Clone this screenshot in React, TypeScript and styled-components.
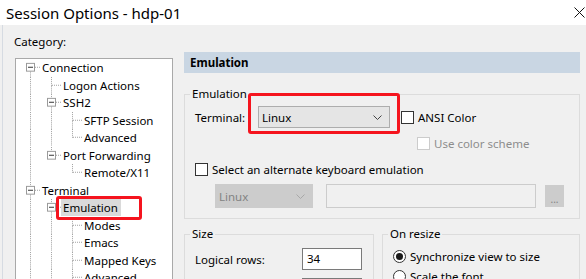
import React from 'react';
import styled, { createGlobalStyle } from 'styled-components';

const GlobalStyle = createGlobalStyle`
  html, body {
    margin: 0;
    padding: 0;
    background: #f0f0f0;
  }
  body {
    font-family: "Noto Sans", "Liberation Sans", sans-serif;
    font-size: 11.5px;
    color: #000;
  }
`;

const Window = styled.div`
  width: 586px;
  height: 279px;
  overflow: hidden;
  display: flex;
  flex-direction: column;
  background: #f0f0f0;
`;

const TitleBar = styled.div`
  height: 25px;
  flex: none;
  background: #fff;
  display: flex;
  align-items: center;
  justify-content: space-between;
  padding: 0 1px 0 6px;
`;

const Title = styled.span`
  font-size: 15px;
  line-height: 20px;
`;

const Body = styled.div`
  flex: 1;
  min-height: 0;
  display: flex;
  gap: 11px;
  padding: 9px 6px 0 11px;
  margin-left: 2px;
  border-left: 1px solid #d6dbe2;
`;

const LeftCol = styled.div`
  width: 159px;
  display: flex;
  flex-direction: column;
`;

const CategoryLabel = styled.div`
  line-height: 16px;
  margin-bottom: 8px;
`;

const TreeBox = styled.div`
  flex: 1;
  margin-left: 1px;
  background: #fff;
  border: 1px solid #a9a9a9;
  border-bottom: none;
  padding-left: 4px;
`;

const TreeRow = styled.div`
  height: 17.5px;
  display: flex;
  align-items: center;
`;

const Cell = styled.svg`
  width: 21px;
  height: 100%;
  flex: none;
`;

const NodeLabel = styled.span<{ selected?: boolean }>`
  position: relative;
  line-height: 17px;
  white-space: nowrap;
  margin-left: -1px;
  padding: 0 3px 0 2px;
  background: ${p => (p.selected ? '#dadada' : 'transparent')};
`;

const RedMark = styled.div<{ l: number; t: number; w: number; h: number }>`
  position: absolute;
  left: ${p => p.l}px;
  top: ${p => p.t}px;
  width: ${p => p.w}px;
  height: ${p => p.h}px;
  box-sizing: border-box;
  border: 3px solid #f5141e;
  border-radius: 3px;
  pointer-events: none;
`;

const RightCol = styled.div`
  flex: 1;
  display: flex;
  flex-direction: column;
  padding-top: 18px;
`;

const PanelHeader = styled.div`
  height: 21px;
  background: #c9d6e3;
  font-weight: bold;
  line-height: 21px;
  padding-left: 6px;
`;

const Group = styled.fieldset<{ w?: number }>`
  margin: 0;
  padding: 0 10px 10px 10px;
  border: 1px solid #dcdcdc;
  min-width: 0;
  ${p => (p.w ? `width: ${p.w}px; flex: none;` : 'flex: 1;')}
  box-sizing: border-box;
`;

const Legend = styled.legend`
  padding: 0 2px;
  margin-left: -5px;
  line-height: 16px;
`;

const Row = styled.div<{ mt: number; h: number; ml?: number }>`
  display: flex;
  align-items: center;
  height: ${p => p.h}px;
  margin-top: ${p => p.mt}px;
  margin-left: ${p => p.ml || 0}px;
`;

const FieldLabel = styled.span<{ w: number }>`
  width: ${p => p.w}px;
  flex: none;
  white-space: nowrap;
`;

const Combo = styled.div<{ w: number; disabled?: boolean }>`
  position: relative;
  width: ${p => p.w}px;
  height: ${p => (p.disabled ? 24 : 22)}px;
  box-sizing: border-box;
  border: 1px solid ${p => (p.disabled ? '#cccccc' : '#adadad')};
  background: ${p => (p.disabled ? '#cccccc' : '#e5e5e5')};
  color: ${p => (p.disabled ? '#838383' : '#000')};
  display: flex;
  align-items: center;
  justify-content: space-between;
  padding: 0 7px 0 3px;
  flex: none;
`;

const TextField = styled.div<{ w: number; disabled?: boolean }>`
  width: ${p => p.w}px;
  height: ${p => (p.disabled ? 24 : 22)}px;
  box-sizing: border-box;
  border: 1px solid ${p => (p.disabled ? '#cccccc' : '#7a7a7a')};
  background: ${p => (p.disabled ? '#f0f0f0' : '#fff')};
  padding-left: 4px;
  line-height: 20px;
  flex: none;
`;

const DotsButton = styled.div`
  width: 19px;
  height: 22px;
  box-sizing: border-box;
  border: 1px solid #cccccc;
  background: #cccccc;
  color: #838383;
  font-size: 10px;
  line-height: 26px;
  text-align: center;
  flex: none;
`;

const Check = styled.span<{ disabled?: boolean }>`
  width: 13px;
  height: 13px;
  box-sizing: border-box;
  border: 1px solid ${p => (p.disabled ? '#cccccc' : '#333')};
  background: #fff;
  flex: none;
`;

const Radio = styled.span<{ checked?: boolean }>`
  width: 13px;
  height: 13px;
  box-sizing: border-box;
  border: 1px solid #333;
  border-radius: 50%;
  background: #fff;
  flex: none;
  display: flex;
  align-items: center;
  justify-content: center;
  &::after {
    content: '';
    width: 7px;
    height: 7px;
    border-radius: 50%;
    background: ${p => (p.checked ? '#1a1a1a' : 'transparent')};
  }
`;

const OptText = styled.span<{ disabled?: boolean }>`
  margin-left: 4px;
  white-space: nowrap;
  color: ${p => (p.disabled ? '#8d8d8d' : '#000')};
`;

const Groups = styled.div`
  display: flex;
  gap: 8px;
  margin-top: 7px;
`;

type Node = {
  label: string;
  guides: boolean[];
  expander?: boolean;
  more: boolean;
  first?: boolean;
  selected?: boolean;
};

const nodes: Node[] = [
  { label: 'Connection', guides: [], expander: true, more: true, first: true },
  { label: 'Logon Actions', guides: [true], more: true },
  { label: 'SSH2', guides: [true], expander: true, more: true },
  { label: 'SFTP Session', guides: [true, true], more: true },
  { label: 'Advanced', guides: [true, true], more: false },
  { label: 'Port Forwarding', guides: [true], expander: true, more: false },
  { label: 'Remote/X11', guides: [true, false], more: false },
  { label: 'Terminal', guides: [], expander: true, more: true },
  { label: 'Emulation', guides: [true], expander: true, more: true, selected: true },
  { label: 'Modes', guides: [true, true], more: true },
  { label: 'Emacs', guides: [true, true], more: true },
  { label: 'Mapped Keys', guides: [true, true], more: true },
  { label: 'Advanced', guides: [true, true], more: true },
];

const dot = { stroke: '#a0a0a0', strokeWidth: 1, strokeDasharray: '1 1' };

function Guide({ on }: { on: boolean }) {
  return (
    <Cell viewBox="0 0 21 18" preserveAspectRatio="none" shapeRendering="crispEdges">
      {on && <line x1="10.5" y1="0" x2="10.5" y2="18" {...dot} />}
    </Cell>
  );
}

function Joint({ node }: { node: Node }) {
  return (
    <Cell viewBox="0 0 21 18" preserveAspectRatio="none" shapeRendering="crispEdges">
      {!node.first && <line x1="10.5" y1="0" x2="10.5" y2="9" {...dot} />}
      {node.more && <line x1="10.5" y1="9" x2="10.5" y2="18" {...dot} />}
      <line x1="11" y1="8.5" x2="21" y2="8.5" {...dot} />
      {node.expander && (
        <g>
          <rect x="6.5" y="4.5" width="8" height="8" fill="#fff" stroke="#9a9a9a" />
          <line x1="8" y1="8.5" x2="13" y2="8.5" stroke="#333" />
        </g>
      )}
    </Cell>
  );
}

function Chevron({ color }: { color: string }) {
  return (
    <svg width="9" height="5" viewBox="0 0 9 5">
      <path d="M0.5 0.5 L4.5 4.5 L8.5 0.5" fill="none" stroke={color} strokeWidth="1" />
    </svg>
  );
}

function CloseIcon() {
  return (
    <svg width="11" height="11" viewBox="0 0 11 11">
      <path d="M0.5 0.5 L10.5 10.5 M10.5 0.5 L0.5 10.5" stroke="#111" strokeWidth="1" />
    </svg>
  );
}

export default function App(): JSX.Element {
  return (
    <>
      <GlobalStyle />
      <Window>
        <TitleBar>
          <Title>Session Options - hdp-01</Title>
          <CloseIcon />
        </TitleBar>
        <Body>
          <LeftCol>
            <CategoryLabel>Category:</CategoryLabel>
            <TreeBox>
              {nodes.map((n, i) => (
                <TreeRow key={i}>
                  {n.guides.map((g, j) => (
                    <Guide key={j} on={g} />
                  ))}
                  <Joint node={n} />
                  <NodeLabel selected={n.selected}>
                    {n.label}
                    {n.selected && <RedMark l={-5} t={-3} w={86} h={24} />}
                  </NodeLabel>
                </TreeRow>
              ))}
            </TreeBox>
          </LeftCol>
          <RightCol>
            <PanelHeader>Emulation</PanelHeader>
            <Group style={{ marginTop: 13, flex: 'none' }}>
              <Legend>Emulation</Legend>
              <Row mt={4} h={22}>
                <FieldLabel w={63}>Terminal:</FieldLabel>
                <Combo w={132}>
                  <span>Linux</span>
                  <Chevron color="#444" />
                  <RedMark l={-11} t={-14} w={152} h={41} />
                </Combo>
                <Check style={{ marginLeft: 11 }} />
                <OptText>ANSI Color</OptText>
              </Row>
              <Row mt={8} h={15} ml={222}>
                <Check disabled />
                <OptText disabled>Use color scheme</OptText>
              </Row>
              <Row mt={11} h={15}>
                <Check />
                <OptText>Select an alternate keyboard emulation</OptText>
              </Row>
              <Row mt={7} h={24} ml={20}>
                <Combo w={98} disabled>
                  <span>Linux</span>
                  <Chevron color="#a8a8a8" />
                </Combo>
                <TextField w={210} disabled style={{ marginLeft: 13 }} />
                <DotsButton style={{ marginLeft: 9 }}>...</DotsButton>
              </Row>
            </Group>
            <Groups>
              <Group w={190}>
                <Legend>Size</Legend>
                <Row mt={6} h={22}>
                  <FieldLabel w={107}>Logical rows:</FieldLabel>
                  <TextField w={60}>34</TextField>
                </Row>
                <Row mt={8} h={22}>
                  <FieldLabel w={107} />
                  <TextField w={60} />
                </Row>
              </Group>
              <Group>
                <Legend>On resize</Legend>
                <Row mt={7} h={14}>
                  <Radio checked />
                  <OptText>Synchronize view to size</OptText>
                </Row>
                <Row mt={6} h={14}>
                  <Radio />
                  <OptText>Scale the font</OptText>
                </Row>
              </Group>
            </Groups>
          </RightCol>
        </Body>
      </Window>
    </>
  );
}
